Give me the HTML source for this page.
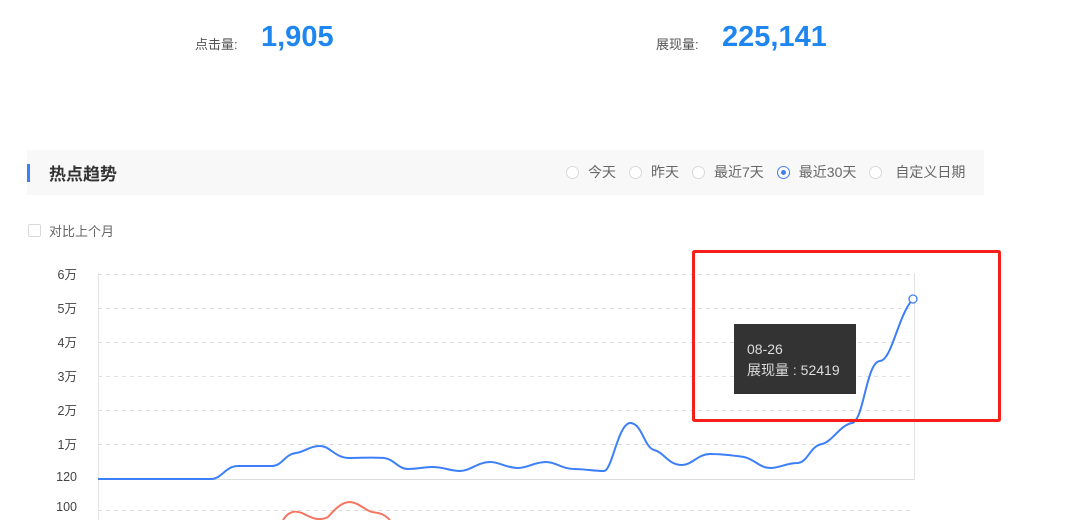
<!DOCTYPE html>
<html><head><meta charset="utf-8"><style>
body{margin:0;width:1069px;height:520px;overflow:hidden;background:#fff;font-family:"Liberation Sans","Noto Sans CJK SC",sans-serif;position:relative}
.a{position:absolute;white-space:nowrap}
.lbl{font-size:13px;color:#555}
.num{font-size:29px;font-weight:bold;color:#1f86f0}
.radio{display:inline-block;width:13px;height:13px;border:1px solid #d9d9d9;border-radius:50%;vertical-align:-2px;margin-right:9px;background:#fff;box-sizing:border-box;position:relative}
.opt{font-size:14px;color:#666;margin-left:13px}
.yl{font-size:12.5px;color:#444;text-align:right;width:40px}
</style></head><body>
<div class="a lbl" style="left:195px;top:34px">点击量:</div>
<div class="a num" style="left:261px;top:21px">1,905</div>
<div class="a lbl" style="left:656px;top:34px">展现量:</div>
<div class="a num" style="left:722px;top:21px">225,141</div>

<div class="a" style="left:27px;top:150px;width:957px;height:45px;background:#f8f8f8"></div>
<div class="a" style="left:27px;top:164px;width:3px;height:18px;background:#3d7ff7"></div>
<div class="a" style="left:49px;top:160px;font-size:17px;font-weight:bold;color:#333">热点趋势</div>
<div class="a" style="left:553px;top:162px">
<span class="opt"><span class="radio"></span>今天</span><span class="opt"><span class="radio"></span>昨天</span><span class="opt"><span class="radio"></span>最近7天</span><span class="opt"><span class="radio" style="border-color:#3d7ff7"><span style="position:absolute;left:3px;top:3px;width:5px;height:5px;border-radius:50%;background:#3d7ff7"></span></span>最近30天</span><span class="opt"><span class="radio" style="margin-right:13px"></span>自定义日期</span>
</div>
<div class="a" style="left:28px;top:224px;width:13px;height:13px;border:1px solid #d9d9d9;border-radius:2px;box-sizing:border-box"></div>
<div class="a" style="left:49px;top:221px;font-size:13px;color:#666">对比上个月</div>

<div class="a yl" style="left:37px;top:264px">6万</div>
<div class="a yl" style="left:37px;top:298px">5万</div>
<div class="a yl" style="left:37px;top:332px">4万</div>
<div class="a yl" style="left:37px;top:366px">3万</div>
<div class="a yl" style="left:37px;top:400px">2万</div>
<div class="a yl" style="left:37px;top:434px">1万</div>
<div class="a yl" style="left:37px;top:470px">120</div>
<div class="a yl" style="left:37px;top:500px">100</div>

<svg class="a" style="left:0;top:0" width="1069" height="520">
<g stroke="#ddd" stroke-dasharray="4,4" stroke-width="1">
<line x1="98" y1="274.5" x2="914" y2="274.5"/><line x1="98" y1="308.5" x2="914" y2="308.5"/><line x1="98" y1="342.5" x2="914" y2="342.5"/><line x1="98" y1="376.5" x2="914" y2="376.5"/><line x1="98" y1="410.5" x2="914" y2="410.5"/><line x1="98" y1="444.5" x2="914" y2="444.5"/><line x1="98" y1="510.5" x2="914" y2="510.5"/>
</g>
<line x1="98" y1="479.5" x2="914" y2="479.5" stroke="#ddd"/>
<line x1="98.5" y1="273" x2="98.5" y2="520" stroke="#e3e3e3"/>
<line x1="914.5" y1="273" x2="914.5" y2="480" stroke="#e3e3e3"/>
<path d="M283,520 C288,512 294,510 302,513 C310,517 318,522 328,517 C336,508 342,502 350,502 C360,503 364,510 372,512 C380,513 384,514 390,520" fill="none" stroke="#f47560" stroke-width="2"/>
<path d="M98,479 L212,479 C222,478 226,466 238,466 L272,466 C282,466 285,454 296,453 C304,452 310,446 320,446 C330,446 334,457 348,458 C360,458 372,457 384,458 C394,459 398,469 408,469 C418,469 424,467 432,467 C444,467 450,471 460,471 C470,471 478,462 490,462 C500,462 506,468 518,468 C528,468 534,462 546,462 C556,462 562,469 574,469 C584,469 594,471 604,471 C612,471 618,424 630,423 C642,423 644,447 654,450 C664,452 668,465 682,465 C692,465 698,454 710,454 C722,454 730,455 744,457 C754,459 760,468 770,468 C780,468 786,463 798,463 C808,462 810,446 822,444 C832,442 840,425 852,423 C864,421 866,362 880,361 C892,360 898,315 913,299" fill="none" stroke="#3d7ff7" stroke-width="2"/>
<circle cx="913" cy="299" r="4" fill="#fff" stroke="#3d7ff7" stroke-width="1.3"/>
<rect x="734" y="324" width="122" height="70" fill="#333"/>
<text x="747" y="354" font-size="14" fill="#ddd" font-family="Liberation Sans,Noto Sans CJK SC,sans-serif">08-26</text>
<text x="747" y="375" font-size="14" fill="#ddd" font-family="Liberation Sans,Noto Sans CJK SC,sans-serif">展现量 : 52419</text>
<rect x="693.5" y="251.5" width="306" height="169" fill="none" stroke="#f5201a" stroke-width="3" rx="1"/>
</svg>
</body></html>
